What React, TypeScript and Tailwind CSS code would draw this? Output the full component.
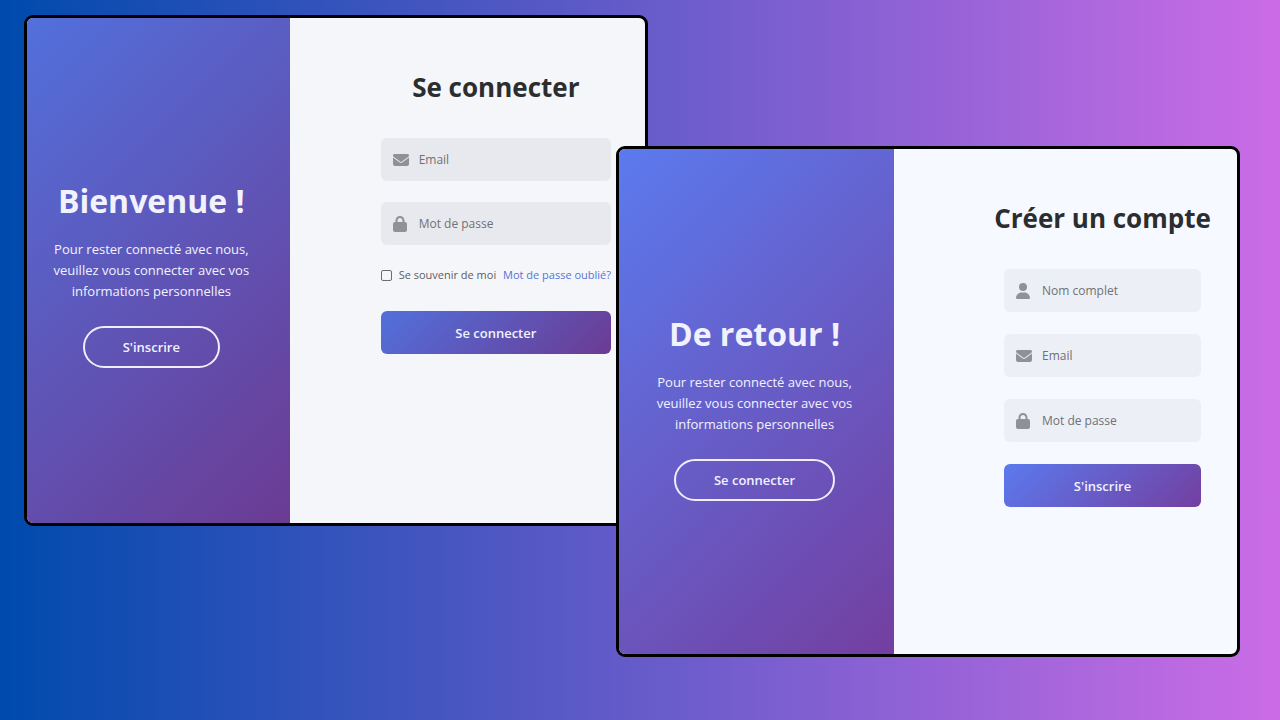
import { useId } from 'react';
import type { ReactNode } from 'react';
import { FaEnvelope } from 'react-icons/fa6';

function UserIcon() {
  return (
    <svg viewBox="0 0 448 512" fill="currentColor" className="h-4 w-[14px]" aria-hidden="true">
      <path d="M224 256A128 128 0 1 0 224 0a128 128 0 1 0 0 256zm-45.7 48C79.8 304 0 383.8 0 482.3C0 498.7 13.3 512 29.7 512H418.3c16.4 0 29.7-13.3 29.7-29.7C448 383.8 368.2 304 269.7 304H178.3z" />
    </svg>
  );
}

function LockIcon() {
  return (
    <svg viewBox="0 0 448 512" fill="currentColor" className="h-4 w-[14px]" aria-hidden="true">
      <path d="M144 144v48H304V144c0-44.2-35.8-80-80-80s-80 35.8-80 80zM80 192V144C80 64.5 144.5 0 224 0s144 64.5 144 144v48h16c35.3 0 64 28.7 64 64V448c0 35.3-28.7 64-64 64H64c-35.3 0-64-28.7-64-64V256c0-35.3 28.7-64 64-64H80z" />
    </svg>
  );
}

type FieldProps = {
  icon: ReactNode;
  label: string;
  type: string;
  tone: string;
};

function Field({ icon, label, type, tone }: FieldProps) {
  const id = useId();

  return (
    <div className={`flex h-[43px] items-center gap-[10px] rounded-md px-3 ${tone}`}>
      <label htmlFor={id} aria-label={label} className="w-4 shrink-0 text-base text-[#8f9196]">
        {icon}
      </label>
      <input
        id={id}
        type={type}
        placeholder={label}
        className="w-full min-w-0 bg-transparent text-xs text-[#333] outline-none placeholder:text-[#707175]"
      />
    </div>
  );
}

type WelcomeProps = {
  title: string;
  action: string;
  className: string;
};

function Welcome({ title, action, className }: WelcomeProps) {
  return (
    <div className={`flex shrink-0 flex-col items-center justify-center text-center text-[#f1f2fd] ${className}`}>
      <h1 className="mb-4 text-[32px] leading-[44px] font-bold">{title}</h1>
      <p className="mb-6 text-[13px] leading-[21px]">
        Pour rester connecté avec nous, veuillez vous connecter avec vos informations personnelles
      </p>
      <button type="button" className="h-[42px] rounded-full border-2 border-[#efeefa] px-[38px] pt-0.5 text-[13px] font-semibold">
        {action}
      </button>
    </div>
  );
}

export default function App() {
  return (
    <main className="flex min-h-screen items-start bg-[linear-gradient(to_right,#004aad,#cb6ce6)] pr-10 pl-6 font-['Open_Sans','Noto_Sans',sans-serif]">

      {/* Connexion */}
      <section className="mt-[15px] flex min-h-[511px] min-w-0 flex-1 overflow-hidden rounded-[9px] border-3 border-black bg-[#f4f6fa]">
        <Welcome
          title="Bienvenue !"
          action="S'inscrire"
          className="w-[42.5%] bg-[linear-gradient(135deg,#5270dc,#6b3b93)] pt-1.5 pr-[30px] pl-4"
        />
        <form className="flex min-w-0 flex-1 flex-col pt-[50px] pr-[34px] pl-[91px]">
          <h2 className="mb-8 flex justify-center text-[26px] leading-[38px] font-bold whitespace-nowrap text-[#2c2d2f]">Se connecter</h2>
          <div className="flex flex-col gap-[21px]">
            <Field icon={<FaEnvelope />} label="Email" type="email" tone="bg-[#e8e9ee]" />
            <Field icon={<LockIcon />} label="Mot de passe" type="password" tone="bg-[#e8e9ee]" />
          </div>
          <div className="mt-5 flex items-center justify-between text-[11px] leading-5 whitespace-nowrap">
            <label className="flex items-center gap-[7px] text-[#5c5d60]">
              <input type="checkbox" className="size-[11px] shrink-0 appearance-none rounded-[2px] border border-[#6c6d70] checked:bg-[#5270dc]" />
              Se souvenir de moi
            </label>
            <a href="#" className="text-[#5873d8]">Mot de passe oublié?</a>
          </div>
          <button type="submit" className="mt-[26px] h-[43px] rounded-md bg-[linear-gradient(135deg,#5270dc,#6b3b93)] pt-0.5 text-[13px] font-semibold text-[#f1f2fd]">
            Se connecter
          </button>
        </form>
      </section>

      {/* Inscription */}
      <section className="relative mt-[146px] -ml-8 flex min-h-[511px] min-w-0 flex-1 overflow-hidden rounded-[9px] border-3 border-black bg-[#f6f9ff]">
        <Welcome
          title="De retour !"
          action="Se connecter"
          className="w-[44.5%] bg-[linear-gradient(135deg,#5b7aee,#733fa0)] pt-2.5 pr-6 pl-5"
        />
        <form className="flex min-w-0 flex-1 flex-col pt-[50px] pr-9 pl-[110px]">
          <h2 className="mb-8 flex justify-center text-[26px] leading-[38px] font-bold whitespace-nowrap text-[#2c2d2f]">Créer un compte</h2>
          <div className="flex flex-col gap-[22px]">
            <Field icon={<UserIcon />} label="Nom complet" type="text" tone="bg-[#eceff6]" />
            <Field icon={<FaEnvelope />} label="Email" type="email" tone="bg-[#eceff6]" />
            <Field icon={<LockIcon />} label="Mot de passe" type="password" tone="bg-[#eceff6]" />
            <button type="submit" className="h-[43px] rounded-md bg-[linear-gradient(135deg,#5b7aee,#733fa0)] pt-0.5 text-[13px] font-semibold text-[#f1f2fd]">
              S'inscrire
            </button>
          </div>
        </form>
      </section>

    </main>
  );
}
